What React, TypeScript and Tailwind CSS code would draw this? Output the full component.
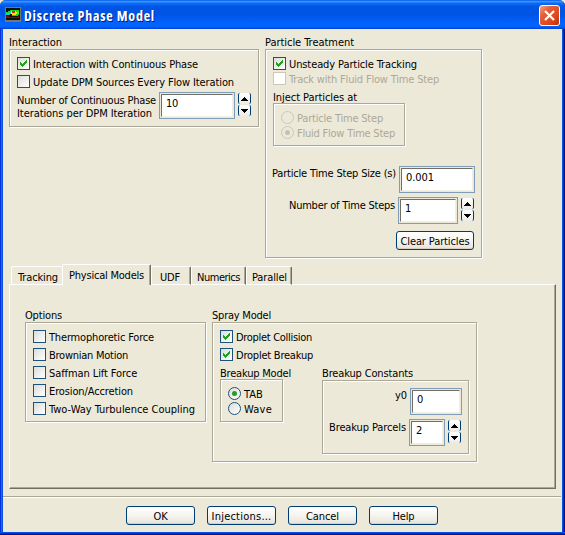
import { useLayoutEffect, useRef, useState } from "react";
import type { ReactNode } from "react";

/** Text spread evenly over a fixed width by adjusting its tracking. */
function Fit({ w, children, className = "", size = "h-[14px] leading-[16px]" }: {
  w: number; children: string; className?: string; size?: string;
}) {
  const ref = useRef<HTMLSpanElement>(null);
  const [spacing, setSpacing] = useState(0);
  useLayoutEffect(() => {
    if (!ref.current) return;
    const natural = ref.current.getBoundingClientRect().width;
    setSpacing((w - natural) / children.length);
  }, [w, children]);
  return (
    <span
      ref={ref}
      className={`block w-fit shrink-0 whitespace-nowrap ${size} ${className}`}
      style={{ letterSpacing: `${spacing}px` }}
    >
      {children}
    </span>
  );
}

function Group({ className, children }: { className: string; children: ReactNode }) {
  return (
    <div className={`border border-[#aca899] shadow-[1px_1px_0_#fff,inset_1px_1px_0_#fff] ${className}`}>
      {children}
    </div>
  );
}

function Check({ label, w, checked, disabled, className = "h-[18px]" }: {
  label: string; w: number; checked?: boolean; disabled?: boolean; className?: string;
}) {
  return (
    <div className={`flex gap-[3px] ${className}`}>
      <span
        className={`h-[13px] w-[13px] shrink-0 border ${
          disabled ? "border-[#cac8bb] bg-white" : "border-[#1c5180] bg-linear-to-br from-[#dcdcd7] to-white"
        }`}
      >
        {checked && (
          <svg viewBox="0 0 11 11" className="block h-[11px] w-[11px]" shapeRendering="crispEdges">
            <path
              d="M2 4h1v3h-1zM3 5h1v3h-1zM4 6h1v3h-1zM5 5h1v3h-1zM6 4h1v3h-1zM7 3h1v3h-1zM8 2h1v3h-1z"
              fill="#21a121"
            />
          </svg>
        )}
      </span>
      <Fit w={w} className={disabled ? "text-[#aca899]" : ""}>{label}</Fit>
    </div>
  );
}

function Radio({ label, w, checked, disabled }: {
  label: string; w: number; checked?: boolean; disabled?: boolean;
}) {
  return (
    <div className="flex h-[15px] gap-[3px]">
      <span
        className={`flex h-[13px] w-[13px] shrink-0 items-center justify-center rounded-full border ${
          disabled ? "border-[#cac8bb]" : "border-[#1c5180] bg-linear-to-br from-[#dcdcd7] to-white"
        }`}
      >
        {checked && (
          <span className={`h-[5px] w-[5px] rounded-full ${disabled ? "bg-[#c4c2b4]" : "bg-[#21a121]"}`} />
        )}
      </span>
      <Fit w={w} className={disabled ? "text-[#aca899]" : ""}>{label}</Fit>
    </div>
  );
}

function Field({ value, w, className }: { value: string; w: number; className: string }) {
  return (
    <div className={`h-[27px] shrink-0 border border-[#7f9db9] bg-[#ece9d8] p-px ${className}`}>
      <div className="h-full border border-t-[#716f64] border-r-[#f1efe2] border-b-[#f1efe2] border-l-[#716f64] bg-white pt-px pl-1">
        <Fit w={w}>{value}</Fit>
      </div>
    </div>
  );
}

function Arrow({ down }: { down?: boolean }) {
  return (
    <span className="flex h-[11px] w-[13px] items-center justify-center rounded-[2px] border-x border-[#003c74] bg-linear-to-b from-white to-[#ecebe6]">
      <svg viewBox="0 0 7 4" className="h-[4px] w-[7px]" shapeRendering="crispEdges">
        <path d={down ? "M0 0h7v1h-1v1h-1v1h-1v1h-1v-1h-1v-1h-1v-1h-1z" : "M3 0h1v1h1v1h1v1h1v1h-7v-1h1v-1h1v-1h1z"} />
      </svg>
    </span>
  );
}

function Spinner() {
  return (
    <div className="mt-px ml-[3px] flex shrink-0 flex-col gap-px">
      <Arrow />
      <Arrow down />
    </div>
  );
}

function Button({ label, w, className = "w-[69px]" }: { label: string; w: number; className?: string }) {
  return (
    <button
      className={`flex h-[19px] shrink-0 justify-center rounded-[3px] border border-[#003c74] bg-linear-to-b from-white via-[#f5f4ef] to-[#e6e3da] pt-[2px] shadow-[inset_0_-1px_0_#d6d0c5] ${className}`}
    >
      <Fit w={w}>{label}</Fit>
    </button>
  );
}

function Tab({ label, w, className }: { label: string; w: number; className: string }) {
  return (
    <div className={`rounded-t-[2px] border-t border-l border-white ${className}`}>
      <Fit w={w}>{label}</Fit>
    </div>
  );
}

const raised = "border-r border-r-[#716f64] shadow-[inset_-1px_0_0_#aca899]";

function TitleBar() {
  return (
    <div className="flex h-[29px] shrink-0 rounded-t-[6px] bg-[linear-gradient(180deg,#0058e6_0%,#3a93ff_5%,#0a6cf5_12%,#0055e5_22%,#0054e3_50%,#005bf5_65%,#0066ff_85%,#0060f5_93%,#003dd7_100%)] pl-[5px]">
      <svg viewBox="0 0 16 15" className="mt-[7px] h-[15px] w-[16px]" shapeRendering="crispEdges">
        <path d="M0 0h16v15H0z" fill="#77776f" />
        <path d="M1 1h14v12H1z" fill="#101008" />
        <path d="M1 5h2v-1h2v-1h9v5h-1v1h-6v-2h-2v1h-4z" fill="#10d820" />
        <path d="M1 6h3v-1h2v2h-2v1h-3z" fill="#00d8d8" />
        <path d="M6 4h5v1h1v2h-1v1h-4v-1h-1z" fill="#f0f000" />
        <path d="M7 4h3v2h-3z" fill="#f02010" />
        <path d="M1 9h3v1h9v-1h1v2h-13z" fill="#900808" />
        <path d="M12 4h2v3h-2z" fill="#28f040" />
      </svg>
      <Fit
        w={131}
        size="h-[20px] text-[14px] leading-[20px]"
        className="mt-[6px] ml-[3px] font-['Open_Sans','Noto_Sans',sans-serif] font-bold text-white [text-shadow:1px_1px_0_#0a1883]"
      >
        Discrete Phase Model
      </Fit>
      <div className="mt-[5px] mr-[5px] ml-auto flex h-[21px] w-[21px] items-center justify-center rounded-[3px] border border-white bg-[linear-gradient(135deg,#f0a48c_0%,#e4603c_30%,#dd4718_70%,#b83008_100%)]">
        <svg viewBox="0 0 11 11" className="h-[11px] w-[11px]">
          <path d="M1 1l9 9M10 1l-9 9" stroke="#fff" strokeWidth="2.2" />
        </svg>
      </div>
    </div>
  );
}

function Interaction() {
  return (
    <section className="w-[250px]">
      <Fit w={53}>Interaction</Fit>
      <Group className="h-[78px] pt-[7px] pl-[7px]">
        <Check checked label="Interaction with Continuous Phase" w={165} />
        <Check label="Update DPM Sources Every Flow Iteration" w={201} />
        <div className="-mt-px flex">
          <div className="mt-px flex w-[142px] flex-col">
            <Fit w={139} size="h-[13px] leading-[15px]">Number of Continuous Phase</Fit>
            <Fit w={135} size="h-[13px] leading-[15px]">Iterations per DPM Iteration</Fit>
          </div>
          <Field value="10" w={12} className="w-[76px]" />
          <Spinner />
        </div>
      </Group>
    </section>
  );
}

function ParticleTreatment() {
  return (
    <section className="w-[217px]">
      <Fit w={89}>Particle Treatment</Fit>
      <Group className="h-[209px] pt-[7px] pl-[7px]">
        <Check checked label="Unsteady Particle Tracking" w={128} className="h-[15px]" />
        <Check disabled label="Track with Fluid Flow Time Step" w={150} />
        <Fit w={84} size="h-[13px] leading-[16px]">Inject Particles at</Fit>
        <Group className="h-[43px] w-[132px] pt-[7px] pl-[7px]">
          <Radio disabled label="Particle Time Step" w={86} />
          <Radio disabled checked label="Fluid Flow Time Step" w={98} />
        </Group>
        <div className="mt-[20px] flex w-[202px] justify-end">
          <Fit w={124} className="mr-[3px]">Particle Time Step Size (s)</Fit>
          <Field value="0.001" w={28} className="w-[76px]" />
        </div>
        <div className="mt-[4px] flex w-[201px] justify-end">
          <Fit w={106} className="mt-px mr-[3px]">Number of Time Steps</Fit>
          <Field value="1" w={6} className="w-[60px]" />
          <Spinner />
        </div>
        <div className="mt-[7px] flex w-[201px] justify-end">
          <Button label="Clear Particles" w={69} className="w-[78px]" />
        </div>
      </Group>
    </section>
  );
}

function Options() {
  return (
    <section className="w-[181px]">
      <Fit w={37}>Options</Fit>
      <Group className="h-[100px] pt-[7px] pl-[7px]">
        <Check label="Thermophoretic Force" w={105} />
        <Check label="Brownian Motion" w={79} />
        <Check label="Saffman Lift Force" w={88} />
        <Check label="Erosion/Accretion" w={84} />
        <Check label="Two-Way Turbulence Coupling" w={146} />
      </Group>
    </section>
  );
}

function SprayModel() {
  return (
    <section className="w-[265px]">
      <Fit w={59}>Spray Model</Fit>
      <Group className="h-[140px] pt-[7px] pl-[7px]">
        <Check checked label="Droplet Collision" w={76} />
        <Check checked label="Droplet Breakup" w={77} />
        <div className="flex">
          <div className="w-[102px]">
            <Fit w={71} size="h-[13px] leading-[16px]">Breakup Model</Fit>
            <Group className="h-[43px] w-[63px] pt-[7px] pl-[7px]">
              <Radio checked label="TAB" w={19} />
              <Radio label="Wave" w={28} />
            </Group>
          </div>
          <div className="w-[147px]">
            <Fit w={91}>Breakup Constants</Fit>
            <Group className="h-[74px] pt-[7px]">
              <div className="flex w-[139px] justify-end">
                <Fit w={12} className="mr-[3px]">y0</Fit>
                <Field value="0" w={6} className="w-[52px]" />
              </div>
              <div className="mt-[4px] flex w-[138px] justify-end">
                <Fit w={77} className="mt-px mr-[3px]">Breakup Parcels</Fit>
                <Field value="2" w={6} className="w-[36px]" />
                <Spinner />
              </div>
            </Group>
          </div>
        </div>
      </Group>
    </section>
  );
}

export default function App() {
  return (
    <div className="h-[535px] w-[565px] overflow-hidden bg-[#ece9d8] font-['DejaVu_Sans_Condensed','DejaVu_Sans',sans-serif] text-[11px] [font-stretch:condensed] text-black">
      <div className="flex h-full flex-col rounded-t-[6px] bg-[linear-gradient(90deg,#0831d9_0_1px,#166aee_1px_2px,#0855dd_2px_3px,#0046e0_3px_562px,#0855dd_562px_563px,#0030c0_563px_564px,#00138c_564px)]">
        <TitleBar />
        <main className="mr-[3px] ml-[3px] flex h-[503px] shrink-0 flex-col bg-[#ece9d8]">
          <div className="flex h-[235px] shrink-0 items-start gap-[6px] pt-[6px] pl-[6px]">
            <Interaction />
            <ParticleTreatment />
          </div>
          <div className="z-10 -mb-px flex h-[21px] shrink-0 items-end pl-[8px]">
            <Tab label="Tracking" w={40} className="h-[19px] w-[51px] border-b pt-[3px] pl-[6px]" />
            <Tab label="Physical Models" w={75} className={`h-[21px] w-[89px] bg-[#ece9d8] pt-[3px] pl-[6px] ${raised}`} />
            <Tab label="UDF" w={20} className={`h-[19px] w-[40px] border-b pt-[3px] pl-[8px] ${raised}`} />
            <Tab label="Numerics" w={43} className={`h-[19px] w-[55px] border-b pt-[3px] pl-[5px] ${raised}`} />
            <Tab label="Parallel" w={35} className={`h-[19px] w-[46px] border-b pt-[3px] pl-[5px] ${raised}`} />
          </div>
          <div className="ml-[6px] flex h-[205px] w-[547px] shrink-0 items-start gap-[6px] border border-t-white border-r-[#716f64] border-b-[#716f64] border-l-white pt-[23px] pl-[15px] shadow-[inset_-1px_-1px_0_#aca899]">
            <Options />
            <SprayModel />
          </div>
          <div className="mt-[7px] mr-px h-[2px] shrink-0 border-t border-b border-t-[#aca899] border-b-white" />
          <div className="mt-[8px] flex shrink-0 gap-[12px] pl-[123px]">
            <Button label="OK" w={14} />
            <Button label="Injections..." w={60} />
            <Button label="Cancel" w={33} />
            <Button label="Help" w={22} />
          </div>
        </main>
        <div className="h-[3px] shrink-0 bg-[linear-gradient(180deg,#0050e8_0_1px,#0030c0_1px_2px,#00138c_2px)]" />
      </div>
    </div>
  );
}
